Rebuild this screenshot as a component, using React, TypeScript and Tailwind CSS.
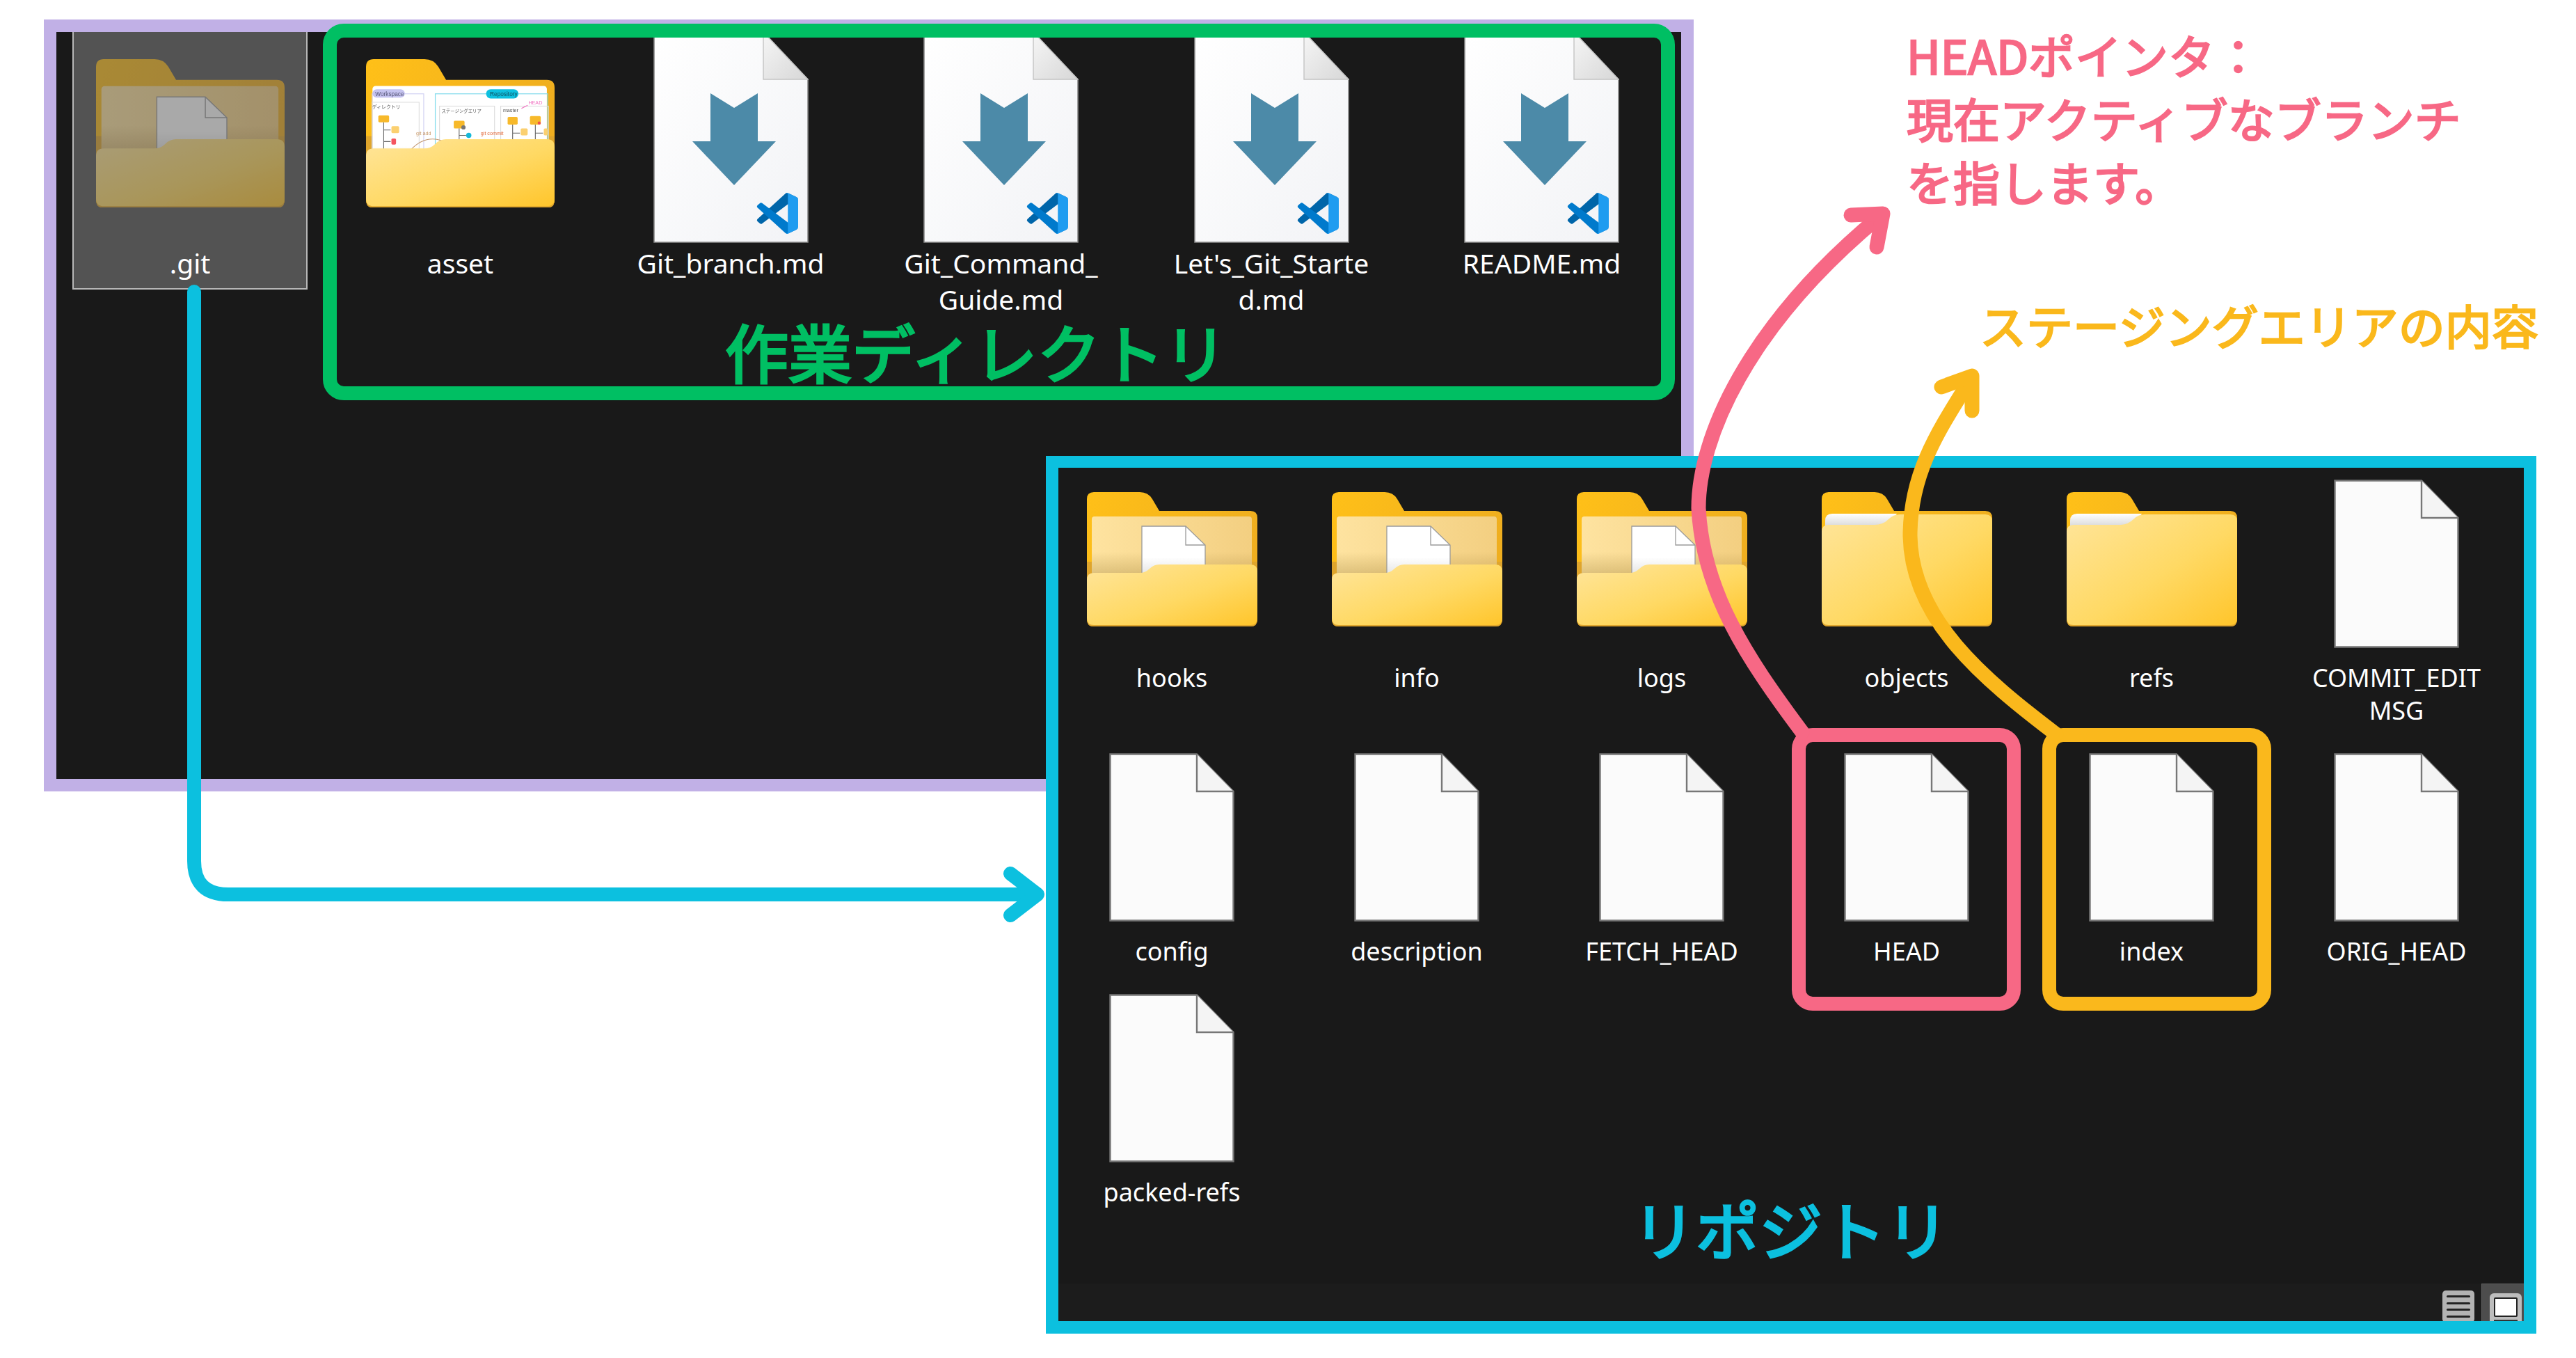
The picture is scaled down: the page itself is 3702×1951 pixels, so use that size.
import React from "react";

const UI = "font-['Noto_Sans','Noto_Sans_CJK_JP',sans-serif] font-normal text-center text-white whitespace-pre-line";

function Defs() {
  return (
    <svg className="absolute w-0 h-0" aria-hidden="true">
      <defs>
        <linearGradient id="tab" x1="0" y1="0" x2="1" y2="0.3">
          <stop offset="0" stopColor="#ffc018" />
          <stop offset="1" stopColor="#efae1f" />
        </linearGradient>
        <linearGradient id="front" x1="0" y1="0" x2="1" y2="1">
          <stop offset="0" stopColor="#ffe59b" />
          <stop offset="0.55" stopColor="#ffd964" />
          <stop offset="1" stopColor="#ffc52b" />
        </linearGradient>
        <linearGradient id="pane" x1="0" y1="0" x2="1" y2="0">
          <stop offset="0" stopColor="#fee3a0" />
          <stop offset="1" stopColor="#f3cf81" />
        </linearGradient>
        <linearGradient id="paneShade" x1="0" y1="0" x2="0" y2="1">
          <stop offset="0.6" stopColor="#8a6a20" stopOpacity="0" />
          <stop offset="1" stopColor="#8a6a20" stopOpacity="0.3" />
        </linearGradient>
        <linearGradient id="doc" x1="0" y1="0" x2="0" y2="1">
          <stop offset="0.55" stopColor="#ffffff" />
          <stop offset="1" stopColor="#d8d8d8" />
        </linearGradient>
        <linearGradient id="sliver" x1="0" y1="0" x2="0" y2="1">
          <stop offset="0" stopColor="#ffffff" />
          <stop offset="1" stopColor="#dcdcdc" />
        </linearGradient>
        <linearGradient id="mdBody" x1="0" y1="0" x2="1" y2="1">
          <stop offset="0" stopColor="#ffffff" />
          <stop offset="1" stopColor="#f2f3f6" />
        </linearGradient>
        <linearGradient id="mdFold" x1="0" y1="0" x2="1" y2="1">
          <stop offset="0" stopColor="#f6f6f6" />
          <stop offset="1" stopColor="#d7d7d7" />
        </linearGradient>
        <filter id="thumbBlur" x="-5%" y="-5%" width="110%" height="110%">
          <feGaussianBlur stdDeviation="0.45" />
        </filter>
      </defs>
    </svg>
  );
}

function Mini({ x, y, w, h, c = "#f7b92a" }: { x: number; y: number; w: number; h: number; c?: string }) {
  return <rect x={x} y={y} width={w} height={h} rx="1.5" fill={c} />;
}

function Thumb() {
  return (
    <g>
      <rect x="8.4" y="34.7" width="226.6" height="95" rx="4" fill="#ffffff" />
      <g filter="url(#thumbBlur)">
        <rect x="8" y="45" width="67" height="90" fill="none" stroke="#cfcff2" strokeWidth="1" />
        <rect x="8" y="56" width="61" height="80" fill="none" stroke="#dedede" strokeWidth="1" />
        <rect x="8.4" y="39" width="42" height="11" rx="5.5" fill="#c5c3ef" />
        <text x="12" y="47.5" fontSize="7.5" fill="#555577" fontFamily="'Liberation Sans',sans-serif">Workspace</text>
        <text x="8" y="64.5" fontSize="6.2" fill="#555" fontFamily="'Noto Sans CJK JP',sans-serif">ディレクトリ</text>
        <Mini x={16} y={73} w={14} h={9} />
        <Mini x={33} y={87} w={10} h={9} c="#fbd06f" />
        <Mini x={33} y={103} w={6} h={8} c="#f4555f" />
        <path d="M23 82V118M23 92H32M23 107H32" stroke="#666" strokeWidth="1" fill="none" />

        <rect x="90" y="45" width="146" height="90" fill="none" stroke="#84dcec" strokeWidth="1.1" />
        <rect x="95.5" y="61" width="71.5" height="70" fill="none" stroke="#dcdcdc" strokeWidth="1" />
        <rect x="175" y="61" width="62" height="70" fill="none" stroke="#dcdcdc" strokeWidth="1" />
        <rect x="156" y="39" width="42" height="12" rx="6" fill="#0cc0df" />
        <text x="161" y="47.5" fontSize="7.5" fill="#0b4f60" fontFamily="'Liberation Sans',sans-serif">Repository</text>
        <text x="98" y="69.5" fontSize="5.8" fill="#555" fontFamily="'Noto Sans CJK JP',sans-serif">ステージングエリア</text>
        <text x="178" y="68.5" fontSize="6.5" fill="#555" fontFamily="'Liberation Sans',sans-serif">master</text>
        <path d="M202 64L210 60" stroke="#f06fc0" strokeWidth="1" />
        <text x="211" y="59" fontSize="6.5" fill="#f06fc0" fontFamily="'Liberation Sans',sans-serif">HEAD</text>

        <Mini x={114} y={80} w={14} h={10} />
        <circle cx="126.6" cy="88.6" r="2.8" fill="#777" />
        <path d="M121 90V115M121 99H130" stroke="#666" strokeWidth="1" fill="none" />
        <circle cx="133.5" cy="99" r="3.4" fill="#12b8d8" />

        <Mini x={184} y={75} w={13} h={10} />
        <Mini x={213} y={74} w={14} h={11} />
        <circle cx="225" cy="83" r="2" fill="#f0504e" />
        <path d="M190.5 85V115M190.5 96H200M220 85V115M220 96H230" stroke="#666" strokeWidth="1" fill="none" />
        <Mini x={201} y={90} w={9} h={9} c="#fbd06f" />
        <Mini x={231} y={90} w={5} h={9} c="#fbd06f" />

        <text x="65" y="99" fontSize="6.5" fill="#c89a6c" fontFamily="'Liberation Sans',sans-serif">git add</text>
        <path d="M58 118Q78 96 104 108" stroke="#c0946c" strokeWidth="1" fill="none" />
        <text x="149" y="99" fontSize="6.5" fill="#e26a3c" fontFamily="'Liberation Sans',sans-serif">git commit</text>
      </g>
      <rect x="8.4" y="95" width="226.6" height="30" fill="url(#paneShade)" opacity="0.35" />
    </g>
  );
}

const FRONT_LOW = "M0 126Q0 116 10 116H76Q84 116 90 110Q96 104 104 104H235Q245 104 245 114V181Q245 191 235 191H10Q0 191 0 181Z";
const FRONT_HIGH = "M0 57Q0 47 10 47H76Q88 47 96 39Q103 32 112 32H235Q245 32 245 42V181Q245 191 235 191H10Q0 191 0 181Z";

function Folder({ kind, width, dim }: { kind: "doc" | "empty" | "thumb"; width: number; dim?: boolean }) {
  return (
    <svg
      viewBox="0 0 245 193"
      width={width}
      height={(width * 193) / 245}
      className={dim ? "opacity-50 shrink-0" : "shrink-0"}
    >
      <path
        d="M0 10Q0 0 10 0H76Q88 0 94 10L104 27H235Q245 27 245 37V183Q245 193 235 193H10Q0 193 0 183Z"
        fill="url(#tab)"
      />
      <path d="M0 100H245V183Q245 193 235 193H10Q0 193 0 183Z" fill="#dfa52c" />
      {kind === "doc" && (
        <g>
          <rect x="7" y="35" width="230" height="90" rx="4" fill="url(#pane)" />
          <rect x="7" y="35" width="230" height="85" rx="4" fill="url(#paneShade)" />
          <path d="M79 49H142L170 76V130H79Z" fill="url(#doc)" stroke="#9b9b9b" strokeWidth="1.3" />
          <path d="M142 49V76H170" fill="none" stroke="#9b9b9b" strokeWidth="1.3" />
        </g>
      )}
      {kind === "empty" && <path d="M5 41Q5 31 15 31H108L96 48H5Z" fill="url(#sliver)" />}
      {kind === "thumb" && <Thumb />}
      <path d={kind === "empty" ? FRONT_HIGH : FRONT_LOW} fill="url(#front)" />
    </svg>
  );
}

function PlainFile() {
  return (
    <svg viewBox="0 0 180 242" width="180" height="242" className="shrink-0">
      <path d="M1.5 1.5H126L178.5 55V240.5H1.5Z" fill="#fbfbfb" stroke="#777" strokeWidth="2.4" />
      <path d="M126 1.5V55H178.5" fill="#f4f4f4" stroke="#777" strokeWidth="2.4" />
    </svg>
  );
}

function MdFile() {
  return (
    <svg viewBox="0 0 223 303" width="223" height="303" className="shrink-0">
      <path d="M1 0H158L222 68V302H1Z" fill="url(#mdBody)" stroke="#8a8a8a" strokeWidth="1.6" />
      <path d="M158 0V68H222Z" fill="url(#mdFold)" stroke="#c4c4c4" strokeWidth="1.4" />
      <path d="M82 88L116 109L150 88V157H176L116 220L56 157H82Z" fill="#4c8aa8" />
      <svg x="148" y="231" width="61" height="59" viewBox="0 0 100 100">
        <path
          d="M96.46 10.8 75.86.9a6.23 6.23 0 0 0-7.1 1.2L1.35 63.58a4.17 4.17 0 0 0 0 6.16l5.51 5.01a4.17 4.17 0 0 0 5.32.24L93.39 13.8c2.73-2.07 6.64-.12 6.64 3.3v-.24a6.25 6.25 0 0 0-3.57-5.64Z"
          fill="#0065a9"
        />
        <path
          d="M96.46 89.2l-20.6 9.92a6.23 6.23 0 0 1-7.1-1.2L1.35 36.42a4.17 4.17 0 0 1 0-6.16l5.51-5.01a4.17 4.17 0 0 1 5.32-.24L93.39 86.2c2.73 2.07 6.64.12 6.64-3.3v.24a6.25 6.25 0 0 1-3.57 5.64Z"
          fill="#007acc"
        />
        <path
          d="M75.86 99.13a6.23 6.23 0 0 1-7.1-1.2c2.3 2.3 6.24.67 6.24-2.59V4.66c0-3.26-3.94-4.89-6.24-2.59a6.23 6.23 0 0 1 7.1-1.2l20.6 9.91A6.25 6.25 0 0 1 100 16.41v67.18a6.25 6.25 0 0 1-3.54 5.63l-20.6 9.91Z"
          fill="#1f9cf0"
        />
      </svg>
    </svg>
  );
}

function TopItem({ label, icon, selected, isFolder }: { label: string; icon: React.ReactNode; selected?: boolean; isFolder?: boolean }) {
  return (
    <div
      className={
        selected
          ? "h-[370px] bg-[#535353] border-x-2 border-b-2 border-[#b8b8b8] flex flex-col items-center"
          : "h-[370px] flex flex-col items-center"
      }
    >
      <div className={isFolder ? "h-[303px] pt-[39px] flex justify-center" : "h-[303px] flex justify-center"}>{icon}</div>
      <div className={`${UI} mt-[3px] text-[39px] leading-[52px] w-full`}>{label}</div>
    </div>
  );
}

function RepoItem({ label, kind }: { label: string; kind: "doc" | "empty" | "file" }) {
  return (
    <div className="flex flex-col items-center">
      <div className={kind === "file" ? "h-[240px] flex justify-center" : "h-[240px] pt-[18px] flex justify-center"}>
        {kind === "file" ? <PlainFile /> : <Folder kind={kind} width={245} />}
      </div>
      <div className={`${UI} mt-[21px] text-[36px] leading-[47px] w-full`}>{label}</div>
    </div>
  );
}

function StatusBar() {
  return (
    <div className="h-[54px] shrink-0 bg-[#1c1c1c] flex justify-end items-start gap-[10px] overflow-hidden">
      <div className="mt-[10px] w-[46px] h-[46px] rounded-[5px] bg-[#b3b3b3] flex flex-col gap-[6.5px] px-[6px] pt-[7px]">
        <div className="h-[3px] bg-[#222] rounded-full shrink-0" />
        <div className="h-[3px] bg-[#222] rounded-full shrink-0" />
        <div className="h-[3px] bg-[#222] rounded-full shrink-0" />
        <div className="h-[3px] bg-[#222] rounded-full shrink-0" />
      </div>
      <div className="w-[61px] h-[54px] bg-[#4d4d4d] border-l border-t border-[#5e5e5e] pl-[11px] pt-[13px]">
        <div className="w-[46px] h-[46px] rounded-[6px] bg-[#bdbdbd] px-[6px] pt-[6px]">
          <div className="h-[28px] w-[34px] bg-white border-2 border-[#222] rounded-[2px]" />
          <div className="h-[2px] w-[34px] bg-[#333] mt-[4px]" />
        </div>
      </div>
    </div>
  );
}

function Arrows() {
  return (
    <svg className="absolute inset-0 pointer-events-none" width="3702" height="1951" viewBox="0 0 3702 1951" fill="none">
      <g stroke="#0cc0df" strokeWidth="20" strokeLinecap="round" strokeLinejoin="round">
        <path d="M279 419V1237Q279 1285 328 1285H1490" />
        <path d="M1452 1255L1491 1285L1452 1315" />
      </g>
      <g stroke="#f76885" strokeWidth="21" strokeLinecap="round" strokeLinejoin="round">
        <path d="M2590 1052C2510 945 2447 850 2441 730C2441 630 2510 470 2700 312" />
        <path d="M2660 309L2706 307L2697 355" />
      </g>
      <g stroke="#fab81c" strokeWidth="21" strokeLinecap="round" strokeLinejoin="round">
        <path d="M2955 1055C2850 975 2747 890 2745 770C2745 680 2785 620 2830 548" />
        <path d="M2790 556L2834 540V590" />
      </g>
    </svg>
  );
}

export default function App() {
  const big = "font-['Noto_Sans_CJK_JP',sans-serif] font-normal [-webkit-text-stroke:3.5px]";
  const small = "font-['Noto_Sans_CJK_JP',sans-serif] font-normal [-webkit-text-stroke:2.5px]";
  return (
    <div className="relative w-[3702px] h-[1951px] bg-white overflow-hidden">
      <Defs />

      {/* Working-directory window */}
      <div className="absolute left-[63px] top-[28px] w-[2371px] h-[1109px] border-[18px] border-[#c1b0e6] bg-[#191919] overflow-hidden">
        <div className="pl-[23px] grid grid-cols-[repeat(6,338px)] gap-x-[50.5px]">
          <TopItem selected isFolder label=".git" icon={<Folder kind="doc" width={271} dim />} />
          <TopItem isFolder label="asset" icon={<Folder kind="thumb" width={271} />} />
          <TopItem label="Git_branch.md" icon={<MdFile />} />
          <TopItem label={"Git_Command_\nGuide.md"} icon={<MdFile />} />
          <TopItem label={"Let's_Git_Starte\nd.md"} icon={<MdFile />} />
          <TopItem label="README.md" icon={<MdFile />} />
        </div>
      </div>

      {/* Green frame around the working tree */}
      <div className="absolute left-[464px] top-[34px] w-[1943px] h-[541px] border-[20px] border-[#00bf63] rounded-[30px] pointer-events-none">
        <span className={`${big} text-[91px] leading-[90px] text-[#00bf63] absolute left-[558px] top-[404px]`}>作業ディレクトリ</span>
      </div>

      {/* Repository window */}
      <div className="absolute left-[1503px] top-[655px] w-[2142px] h-[1261px] border-x-[18px] border-t-[17px] border-b-[18px] border-[#0cc0df] bg-[#191919] flex flex-col overflow-hidden">
        <div className="flex-1 pl-[2px] pt-[17px] grid grid-cols-[repeat(6,322px)] auto-rows-min gap-x-[30px] gap-y-[38px]">
          <RepoItem kind="doc" label="hooks" />
          <RepoItem kind="doc" label="info" />
          <RepoItem kind="doc" label="logs" />
          <RepoItem kind="empty" label="objects" />
          <RepoItem kind="empty" label="refs" />
          <RepoItem kind="file" label={"COMMIT_EDIT\nMSG"} />
          <RepoItem kind="file" label="config" />
          <RepoItem kind="file" label="description" />
          <RepoItem kind="file" label="FETCH_HEAD" />
          <RepoItem kind="file" label="HEAD" />
          <RepoItem kind="file" label="index" />
          <RepoItem kind="file" label="ORIG_HEAD" />
          <RepoItem kind="file" label="packed-refs" />
        </div>
        <StatusBar />
        <span className={`${big} text-[91px] leading-[90px] text-[#0cc0df] absolute left-[825px] top-[1046px]`}>リポジトリ</span>
      </div>

      {/* Highlight frames */}
      <div className="absolute left-[2575px] top-[1046px] w-[329px] h-[406px] border-[20px] border-[#f76885] rounded-[30px]" />
      <div className="absolute left-[2935px] top-[1046px] w-[329px] h-[406px] border-[20px] border-[#fab81c] rounded-[30px]" />

      <Arrows />

      {/* Annotations */}
      <div className={`${small} absolute left-[2740px] top-[32px] text-[67px] leading-[91px] text-[#f76885] whitespace-pre`}>
        {"HEADポインタ：\n現在アクティブなブランチ\nを指します。"}
      </div>
      <div className={`${small} absolute left-[2845px] top-[420px] text-[67px] leading-[91px] text-[#fab81c] whitespace-pre`}>
        ステージングエリアの内容
      </div>
    </div>
  );
}
